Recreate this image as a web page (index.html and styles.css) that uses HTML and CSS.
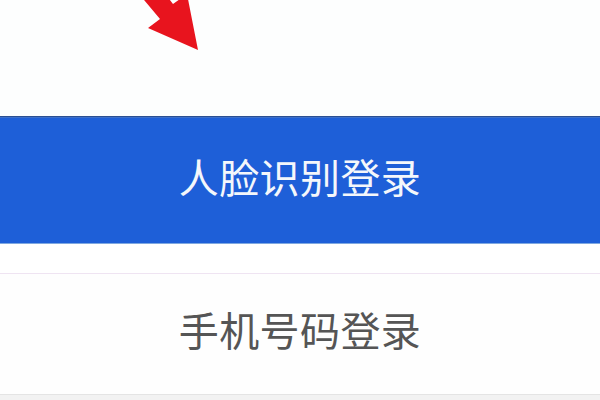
FILE: index.html
```html
<!DOCTYPE html>
<html lang="zh-CN">
<head>
<meta charset="utf-8">
<link rel="stylesheet" href="styles.css">
</head>
<body>
<div class="page">
  <div class="top">
    <svg class="arrow" width="600" height="117" viewBox="0 0 600 117">
      <polygon points="134,-12 150,-26 173,4 187,-6 198,50 148,28 160,19" fill="#e8141e"/>
    </svg>
  </div>
  <div class="btn btn-face">人脸识别登录</div>
  <div class="spacer"></div>
  <div class="btn btn-phone">手机号码登录</div>
  <div class="footer"></div>
</div>
</body>
</html>
```
FILE: styles.css
```css
html, body {
  margin: 0;
  padding: 0;
  background: #ffffff;
}
.page {
  width: 600px;
  height: 400px;
  overflow: hidden;
  display: flex;
  flex-direction: column;
  font-family: "Noto Sans CJK SC", "Noto Sans", sans-serif;
}
.top {
  height: 116px;
  flex: none;
  background: #fdfefe;
}
.arrow {
  display: block;
}
.btn {
  flex: none;
  display: flex;
  align-items: center;
  justify-content: center;
  font-size: 40px;
  letter-spacing: 0.4px;
  box-sizing: border-box;
}
.btn-face {
  height: 128px;
  padding-bottom: 8px;
  background: #1e5fd8;
  color: #f4f7fb;
  border-top: 1px solid #2a4f93;
  box-shadow: inset 0 1px 0 #3c6fc8;
  border-bottom: 1px solid #7fa8e0;
}
.spacer {
  height: 29px;
  flex: none;
  background: #ffffff;
  border-bottom: 1px solid #efe4f2;
}
.btn-phone {
  height: 120px;
  padding-bottom: 10px;
  background: #fefefe;
  color: #555555;
}
.footer {
  flex: 1;
  background: #f2f2f2;
  border-top: 1px solid #e4e4e4;
}
```
